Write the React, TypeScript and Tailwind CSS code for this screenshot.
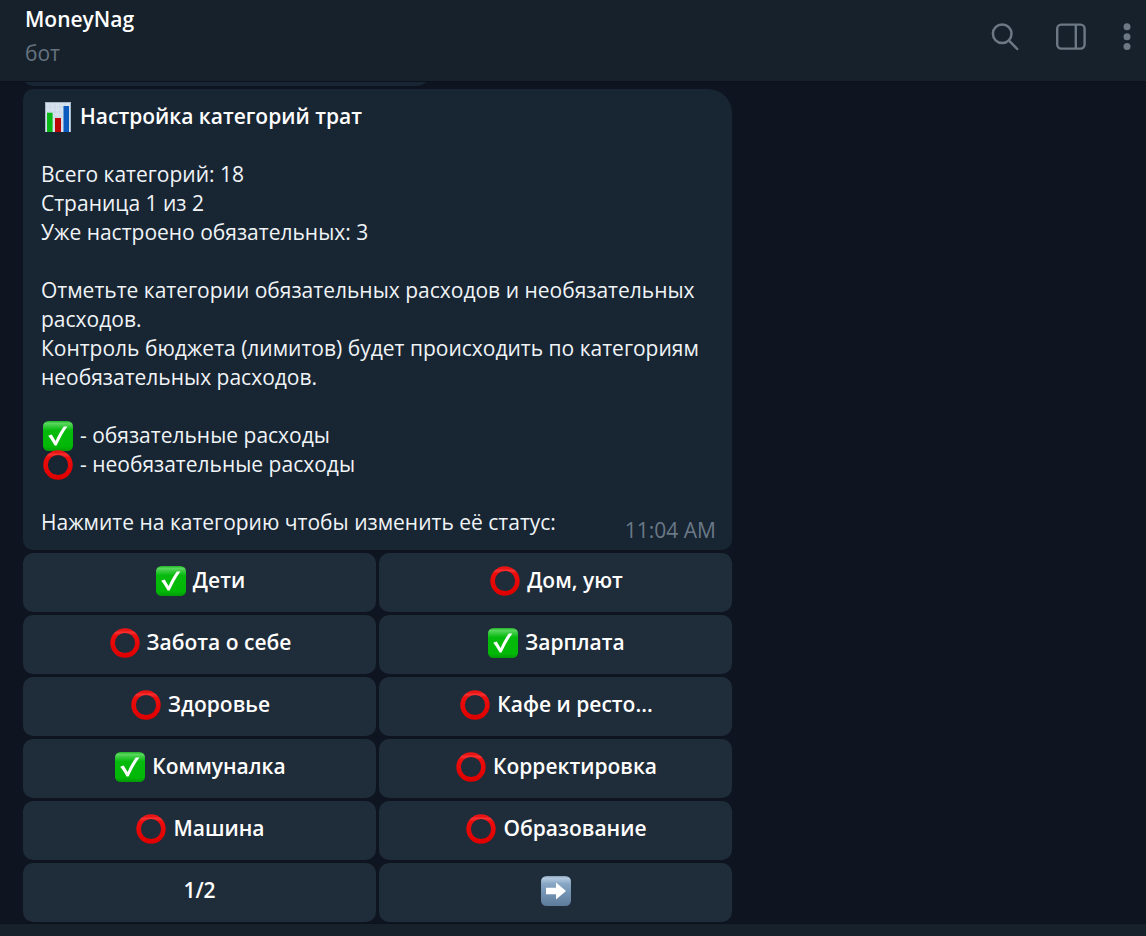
import React from "react";

type Status = "required" | "optional";

const categories: { name: string; status: Status }[] = [
  { name: "Дети", status: "required" },
  { name: "Дом, уют", status: "optional" },
  { name: "Забота о себе", status: "optional" },
  { name: "Зарплата", status: "required" },
  { name: "Здоровье", status: "optional" },
  { name: "Кафе и ресто...", status: "optional" },
  { name: "Коммуналка", status: "required" },
  { name: "Корректировка", status: "optional" },
  { name: "Машина", status: "optional" },
  { name: "Образование", status: "optional" },
];

function CheckIcon() {
  return (
    <svg viewBox="0 0 30 30" className="mx-0.5 h-[30px] w-[30px] shrink-0" aria-hidden="true">
      <defs>
        <linearGradient id="check-fill" x1="0" y1="0" x2="0" y2="1">
          <stop offset="0" stopColor="#1fb526" />
          <stop offset="0.08" stopColor="#5ad65e" />
          <stop offset="0.2" stopColor="#2cc733" />
          <stop offset="0.32" stopColor="#05ba0c" />
          <stop offset="0.85" stopColor="#02b807" />
          <stop offset="1" stopColor="#039a08" />
        </linearGradient>
      </defs>
      <rect width="30" height="30" rx="5.5" fill="url(#check-fill)" />
      <path d="M5.2 14.8 L8.7 13.4 L12.6 19.9 C14.9 14.6 17.8 9.4 20.8 5.4 L24.4 5.4 C20.2 11.4 16.7 17.7 13.6 24.6 L11.6 24.6 C9.8 21 7.6 17.8 5.2 14.8Z" fill="#fff" />
    </svg>
  );
}

function CircleIcon() {
  return (
    <svg viewBox="0 0 30 30" className="mx-0.5 h-[30px] w-[30px] shrink-0" aria-hidden="true">
      <defs>
        <linearGradient id="ring-stroke" x1="0" y1="0" x2="0" y2="1">
          <stop offset="0" stopColor="#e81515" />
          <stop offset="0.07" stopColor="#f83030" />
          <stop offset="0.2" stopColor="#ec0d0d" />
          <stop offset="1" stopColor="#e00000" />
        </linearGradient>
      </defs>
      <circle cx="15" cy="15" r="12.4" fill="none" stroke="url(#ring-stroke)" strokeWidth="4.6" />
    </svg>
  );
}

function ArrowIcon() {
  return (
    <svg viewBox="0 0 30 30" className="h-[30px] w-[30px]" aria-hidden="true">
      <defs>
        <linearGradient id="arrow-fill" x1="0" y1="0" x2="0" y2="1">
          <stop offset="0" stopColor="#8ba5bf" />
          <stop offset="0.08" stopColor="#b3c9de" />
          <stop offset="0.25" stopColor="#8aa8c6" />
          <stop offset="0.5" stopColor="#7897b6" />
          <stop offset="1" stopColor="#5d7b9b" />
        </linearGradient>
      </defs>
      <rect width="30" height="30" rx="5.5" fill="url(#arrow-fill)" />
      <path d="M5 11.8 H15 V6.6 L25 15 L15 23.4 V18.2 H5Z" fill="#fff" />
    </svg>
  );
}

function ChartIcon() {
  return (
    <svg viewBox="0 0 30 30" className="mx-0.5 h-[30px] w-[30px] shrink-0" aria-hidden="true">
      <rect x="2" width="26" height="30" fill="#d5e2ee" />
      <path d="M2 5H28M2 10H28M2 15H28M2 20H28M2 25H28M7 0V30M12 0V30M17 0V30M22 0V30" stroke="#c6d4e2" strokeWidth="0.6" />
      <path d="M2.5 30V0.5H27.5V30" fill="none" stroke="#a5b9cb" />
      <rect x="4" y="10.7" width="5.6" height="19.3" fill="#0ab818" />
      <rect x="12" y="16" width="6" height="14" fill="#bd0505" />
      <rect x="20.5" y="4" width="5.5" height="26" fill="#0a5bbd" />
    </svg>
  );
}

function StatusIcon({ status }: { status: Status }) {
  return status === "required" ? <CheckIcon /> : <CircleIcon />;
}

const keyClass =
  "flex h-[59px] items-center justify-center gap-[5px] rounded-[10px] bg-[#1f2c39] pb-1 font-semibold text-white";

export default function App() {
  return (
    <div className="flex min-h-screen flex-col bg-[#0e1520] font-['Open_Sans','Noto_Sans',sans-serif] text-[21px] leading-[29px] text-[#f0f4f7]">
      <header className="flex h-[81px] items-center justify-between bg-[#17212b] pr-3 pl-[25px]">
        <div className="pb-[9px]">
          <h1 className="mb-[5px] font-semibold text-white">MoneyNag</h1>
          <p className="text-[#65737f]">бот</p>
        </div>
        <div className="flex items-center pb-2 text-[#6c7883]">
          <button type="button" aria-label="Поиск" className="mr-9">
            <svg viewBox="0 0 30 30" className="h-[30px] w-[30px]" fill="none" stroke="currentColor" strokeWidth="2.5" strokeLinecap="round">
              <circle cx="12.2" cy="11.8" r="9.3" />
              <path d="M19 18.6L27.2 27" />
            </svg>
          </button>
          <button type="button" aria-label="Боковая панель" className="mr-[34px]">
            <svg viewBox="0 0 30 30" className="h-[30px] w-[30px]" fill="none" stroke="currentColor" strokeWidth="2.4">
              <rect x="1.2" y="2.6" width="27.4" height="24" rx="4" />
              <path d="M19.8 2.6V26.6" />
            </svg>
          </button>
          <button type="button" aria-label="Меню">
            <svg viewBox="0 0 14 30" className="h-[30px] w-3.5" fill="currentColor">
              <circle cx="7" cy="4.7" r="3.5" />
              <circle cx="7" cy="14.7" r="3.5" />
              <circle cx="7" cy="24.6" r="3.5" />
            </svg>
          </button>
        </div>
      </header>

      <main className="flex-1 border-t border-[#0b121b] px-[23px]">
        <div className="h-1 w-full max-w-[405px] overflow-hidden">
          <div className="-mt-6 h-7 rounded-b-[10px] bg-[#182533]" />
        </div>
        <article className="mt-[3px] w-full max-w-[709px] rounded-[10px] rounded-tr-[24px] bg-[#182533] pr-4 pt-[13px] pb-[5px] pl-[18px]">
          <h2 className="mb-[29px] flex h-[29px] items-center gap-[5px] font-semibold text-white">
            <ChartIcon />
            Настройка категорий трат
          </h2>
          <p className="mb-[29px]">
            Всего категорий: 18
            <br />
            Страница 1 из 2
            <br />
            Уже настроено обязательных: 3
          </p>
          <p className="mb-[29px]">
            Отметьте категории обязательных расходов и необязательных расходов.
            <br />
            Контроль бюджета (лимитов) будет происходить по категориям необязательных расходов.
          </p>
          <ul className="mb-[29px]">
            <li className="flex h-[29px] items-center gap-[5px]">
              <CheckIcon />- обязательные расходы
            </li>
            <li className="flex h-[29px] items-center gap-[5px]">
              <CircleIcon />- необязательные расходы
            </li>
          </ul>
          <div className="flex items-end justify-between">
            <p className="pb-2">Нажмите на категорию чтобы изменить её статус:</p>
            <time className="shrink-0 text-[#6a7987]">11:04 AM</time>
          </div>
        </article>

        <div className="mt-[3px] grid w-full max-w-[709px] grid-cols-2 gap-[3px]">
          {categories.map((c) => (
            <button key={c.name} type="button" className={keyClass}>
              <StatusIcon status={c.status} />
              {c.name}
            </button>
          ))}
          <button type="button" className={keyClass}>
            1/2
          </button>
          <button type="button" aria-label="Следующая страница" className={keyClass}>
            <ArrowIcon />
          </button>
        </div>
      </main>
      <footer className="mt-px h-[13px] border-t border-[#0b121b] bg-[#17212b]" />
    </div>
  );
}
